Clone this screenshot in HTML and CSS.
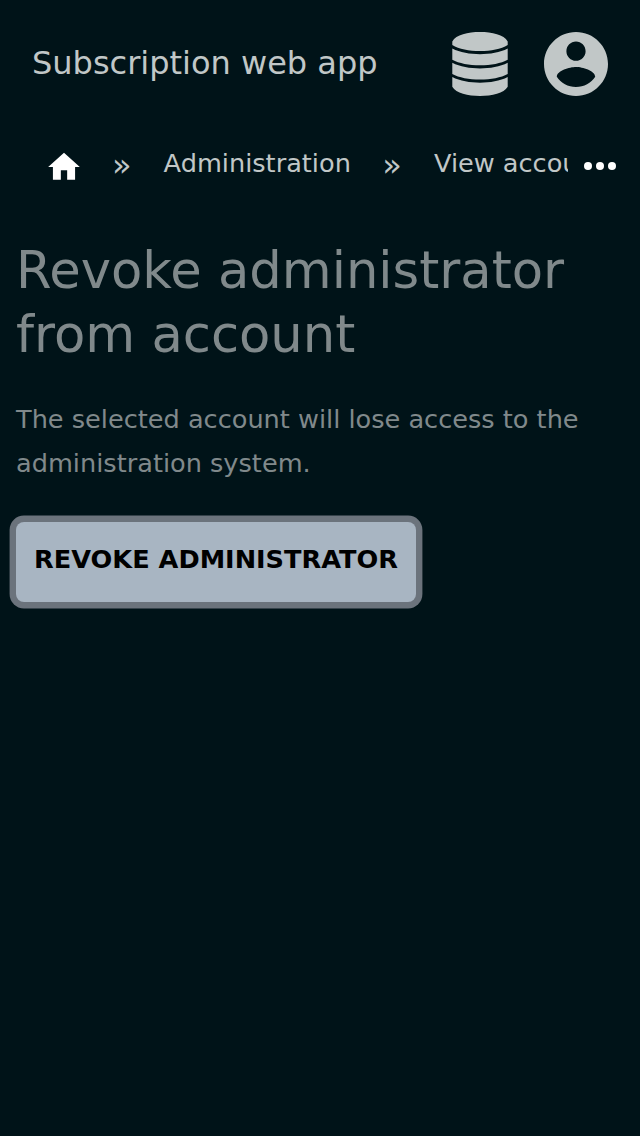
FILE: index.html
```html
<!DOCTYPE html>
<html lang="en">
<head>
<meta charset="utf-8">
<title>Subscription web app</title>
<link rel="stylesheet" href="styles.css">
</head>
<body>
<header class="topbar">
  <a class="brand">Subscription web app</a>
  <svg class="data-icon" viewBox="0 0 56 64"><path d="M.3 9.500C4 2.500 16 0 28 0s24 2.500 27.700 9.500v3.500C49 17 39 19 28 19S7 17 .3 13zM.3 16.500C8 20.500 18 22.200 28 22.200s20-1.700 27.700-5.700v11.300C49 31.500 39 33.300 28 33.300S7 31.500 .3 27.800zM.3 30.800C8 34.800 18 36.500 28 36.500s20-1.700 27.700-5.700v11.200C49 45.700 39 47.500 28 47.500S7 45.700 .3 42zM.3 45.100C8 49.100 18 50.800 28 50.800s20-1.700 27.700-5.700v9.700C52 61.500 40 64 28 64S4 61.500 .3 54.800z"/></svg>
  <svg class="user-icon" viewBox="2 2 20 20"><path d="M12 2C6.480 2 2 6.480 2 12s4.480 10 10 10 10-4.480 10-10S17.520 2 12 2zm0 3c1.660 0 3 1.340 3 3s-1.340 3-3 3-3-1.340-3-3 1.340-3 3-3zm0 14.200c-2.500 0-4.710-1.280-6-3.220.03-1.990 4-3.080 6-3.080 1.990 0 5.970 1.090 6 3.080-1.290 1.940-3.500 3.220-6 3.220z"/></svg>
</header>
<nav class="crumbs">
  <div class="trail">
    <svg class="home-icon" viewBox="0 0 24 24"><path d="M10 20v-6h4v6h5v-8h3L12 3 2 12h3v8z"/></svg>
    <span class="sep">»</span><span class="crumb">Administration</span>
    <span class="sep">»</span><span class="crumb">View account</span>
  </div>
  <svg class="more-icon" viewBox="0 0 32 8"><circle cx="4" cy="4" r="4"/><circle cx="16" cy="4" r="4"/><circle cx="28" cy="4" r="4"/></svg>
</nav>
<main class="content">
  <h1 class="title">Revoke administrator from account</h1>
  <p class="note">The selected account will lose access to the administration system.</p>
  <button class="action">REVOKE ADMINISTRATOR</button>
</main>
</body>
</html>
```
FILE: styles.css
```css
body { margin: 0; min-height: 1136px; background: #001318; color: #c1c7c7; font-family: "DejaVu Sans", sans-serif; }
.topbar { display: flex; align-items: center; height: 128px; padding: 0 32px; box-sizing: border-box; fill: #c1c7c7; }
.brand { flex: 1; font-size: 32px; line-height: 48px; padding-bottom: 2px; white-space: nowrap; }
.data-icon { width: 56px; height: 64px; margin-right: 36px; }
.user-icon { width: 64px; height: 64px; }
.crumbs { display: flex; align-items: center; height: 76px; padding: 0 24px 0 45px; fill: #fff; }
.trail { display: flex; align-items: center; width: 523px; overflow: hidden; white-space: nowrap; }
.home-icon { flex: none; width: 38px; height: 38px; margin: 1px -2.5px 0 0; }
.sep { font-size: 32px; line-height: 38px; width: 20px; margin: 0 32px 0 31.5px; padding-bottom: 2px; }
.crumb { font-size: 25.600px; line-height: 38px; padding-bottom: 6px; }
.more-icon { width: 32px; height: 8px; margin-left: 16px; }
.content { padding: 34px 16px 0; }
.title { margin: 0; font-size: 51.200px; line-height: 64px; font-weight: 400; color: #80898b; }
.note { margin: 31px 0 37px; font-size: 25.600px; line-height: 44px; color: #80898b; }
.action { display: block; width: 400px; height: 80px; padding: 0 0 6px; border: 0; border-radius: 8px; background: #a8b5c2; box-shadow: 0 0 0 6.4px #6b737c; color: #000; font: bold 25.600px "DejaVu Sans", sans-serif; white-space: nowrap; }
```
